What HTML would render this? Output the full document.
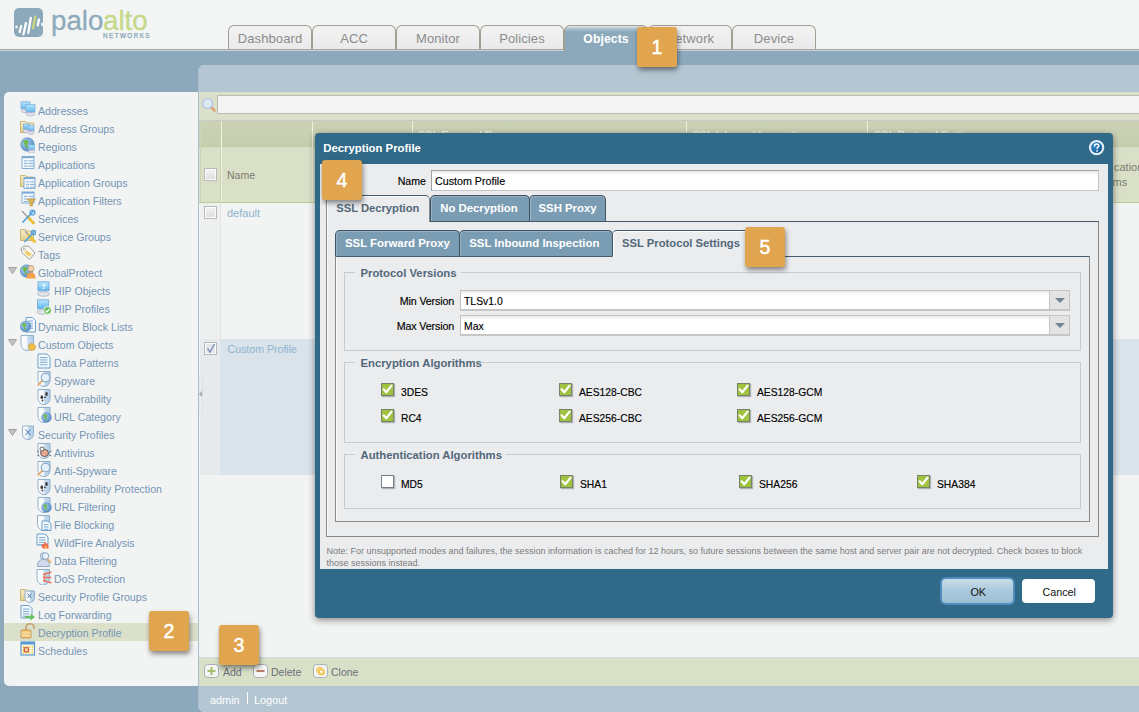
<!DOCTYPE html><html><head><meta charset="utf-8"><style>
*{margin:0;padding:0}
html,body{width:1139px;height:712px;overflow:hidden;background:#8ca9bc;position:relative;font-family:"Liberation Sans", sans-serif}
.t{position:absolute;white-space:nowrap}
.tab{position:absolute;top:25px;width:82px;height:23px;border:1px solid #a39e92;border-bottom:none;border-radius:6px 6px 0 0;background:linear-gradient(#f1f2f1,#e9eae9);text-align:center}
.tab span{display:block;font-size:13px;line-height:13px;margin-top:6px;color:#8c8c8c;letter-spacing:0.1px}
.tab.act{background:linear-gradient(#dfe7ec 0px,#a9bfcd 3px,#8ca9bc 6px);height:26px}
.tab.act span{color:#fff;font-weight:700;font-size:12.2px;margin-top:7px}
.cb{position:absolute;width:13px;height:13px;box-sizing:border-box;border:1px solid #b9b9b9;box-shadow:inset 0 0 0 1px #fbfbfb;background:linear-gradient(#f4f4f4,#dcdcdc)}
.dtab{position:absolute;box-sizing:border-box;border:1px solid #3e5463;border-bottom:none;border-radius:5px 5px 0 0;background:#7b9db3;box-shadow:inset 1px 1px 0 rgba(255,255,255,0.22)}
.dtab.act{background:#ebecee;border-color:#44586a #7f8a92 #7f8a92 #8a8a8a;box-shadow:inset 1px 1px 0 #fff}
.inp{position:absolute;box-sizing:border-box;border:1px solid #c2c2c2;border-bottom:2px solid #c6c6c6;background:linear-gradient(#e9e9e9,#fff 4px,#fff)}
.trig{position:absolute;width:21px;height:21px;box-sizing:border-box;border:1px solid #c6c6c6;border-bottom:2px solid #c6c6c6;background:#e3e3e3}
.trig:after{content:'';position:absolute;left:4.5px;top:6.5px;border-left:5.25px solid transparent;border-right:5.25px solid transparent;border-top:5.5px solid #6f8595}
.gcb{position:absolute;width:13px;height:13px;box-sizing:border-box;border:1px solid #75836a;background:#a0c33f;box-shadow:1px 1px 1px rgba(0,0,0,0.25)}
.gcb svg{position:absolute;left:-1px;top:-1px}
.wcb{position:absolute;width:13px;height:13px;box-sizing:border-box;border:1px solid #75808a;background:#fff;box-shadow:1px 1px 1px rgba(0,0,0,0.25)}
.badge{position:absolute;width:40px;height:40px;background:#e2a54f;border-radius:3px;box-shadow:1px 3px 5px rgba(0,0,0,0.45);color:#fff;font-size:19.5px;line-height:40px;text-align:center;-webkit-text-stroke:0.45px #fff}
</style></head><body>
<div style="position:absolute;left:0px;top:0px;width:1139px;height:49px;background:#f3f5f4"></div>
<div style="position:absolute;left:0px;top:49px;width:1139px;height:1px;background:#a7a59c"></div>
<div style="position:absolute;left:0px;top:50px;width:1139px;height:1px;background:#c3d3df"></div>
<div style="position:absolute;left:0px;top:51px;width:1139px;height:661px;background:#8ca9bc"></div>
<svg style="position:absolute;left:14px;top:8px" width="30" height="30" viewBox="0 0 30 30">
<rect x="0" y="0" width="29" height="29" rx="5" fill="#8ca9bc"/>
<g stroke="#fff" stroke-width="2.3" stroke-linecap="round">
<line x1="2.6" y1="18.6" x2="2.4" y2="19.2"/>
<line x1="7.2" y1="18" x2="5.6" y2="24"/>
<line x1="12" y1="15" x2="9.4" y2="26.3"/>
<line x1="16.8" y1="10" x2="14.3" y2="24.9"/>
<line x1="24.9" y1="11.5" x2="23.8" y2="17.3"/>
</g>
<line x1="21.3" y1="8.8" x2="19" y2="20.2" stroke="#c6d77f" stroke-width="2.4" stroke-linecap="round"/>
<rect x="27.4" y="14.8" width="2" height="3" fill="#fff"/>
</svg>
<div class="t" style="left:51px;top:6.65px;font-size:27.7px;line-height:27.7px;color:#8eaabb;font-weight:400;letter-spacing:0px;-webkit-text-stroke:0.3px #8eaabb">palo</div>
<div class="t" style="left:103px;top:6.65px;font-size:27.7px;line-height:27.7px;color:#c5d889;font-weight:400;letter-spacing:0px;-webkit-text-stroke:0.3px #c5d889">alto</div>
<div class="t" style="left:103px;top:33.47px;font-size:6.3px;line-height:6.3px;color:#86a4b8;font-weight:400;letter-spacing:1.45px;-webkit-text-stroke:0.25px #86a4b8">NETWORKS</div>
<div class="tab" style="left:228px"><span>Dashboard</span></div>
<div class="tab" style="left:312px"><span>ACC</span></div>
<div class="tab" style="left:396px"><span>Monitor</span></div>
<div class="tab" style="left:480px"><span>Policies</span></div>
<div class="tab act" style="left:564px"><span>Objects</span></div>
<div class="tab" style="left:648px"><span>Network</span></div>
<div class="tab" style="left:732px"><span>Device</span></div>
<div style="position:absolute;left:4px;top:92px;width:194px;height:594px;background:#f2f4f3;border-radius:5px 0 0 5px"></div>
<div style="position:absolute;left:4px;top:623px;width:194px;height:18px;background:#dae0c9"></div>
<svg width="0" height="0" style="position:absolute"><defs>
<linearGradient id="gScr" x1="0" y1="0" x2="0" y2="1"><stop offset="0" stop-color="#b9e6fc"/><stop offset="1" stop-color="#62b6ee"/></linearGradient>
<linearGradient id="gSh" x1="0" y1="0" x2="1" y2="0"><stop offset="0" stop-color="#fdfdfd"/><stop offset="0.5" stop-color="#f2f5f8"/><stop offset="0.55" stop-color="#c3d8ec"/><stop offset="1" stop-color="#b5cfe8"/></linearGradient>
<linearGradient id="gFold" x1="0" y1="0" x2="0" y2="1"><stop offset="0" stop-color="#f6eccb"/><stop offset="1" stop-color="#e2cf8c"/></linearGradient>
<radialGradient id="gGlobe" cx="0.35" cy="0.35" r="0.75"><stop offset="0" stop-color="#a9d2f2"/><stop offset="1" stop-color="#4f86c4"/></radialGradient>
</defs></svg>
<svg style="position:absolute;left:20px;top:101px" width="16" height="16" viewBox="0 0 16 16"><rect x="1" y="0.8" width="9" height="7" fill="url(#gScr)" stroke="#7fb3dc" stroke-width="0.8"/><ellipse cx="5.5" cy="9.8" rx="4.5" ry="1.8" fill="#e6e6ee" stroke="#a8a8bc" stroke-width="0.7"/><rect x="4.5" y="7.8" width="2" height="1.5" fill="#b8a8d8"/><rect x="6" y="3.5" width="9" height="7.5" fill="url(#gScr)" stroke="#7fb3dc" stroke-width="0.8"/><ellipse cx="10.5" cy="13.0" rx="4.5" ry="1.8" fill="#e6e6ee" stroke="#a8a8bc" stroke-width="0.7"/><rect x="9.5" y="11.0" width="2" height="1.5" fill="#b8a8d8"/></svg>
<div class="t" style="left:38px;top:106.03px;font-size:10.6px;line-height:10.6px;color:#7594b5;font-weight:400;letter-spacing:0px;">Addresses</div>
<svg style="position:absolute;left:20px;top:119px" width="16" height="16" viewBox="0 0 16 16"><path d="M0.5 2.5 H5.5 L7 4 H13.5 V13.5 H0.5 Z" fill="url(#gFold)" stroke="#c7b06a" stroke-width="0.9"/><rect x="3.5" y="5" width="6" height="5" fill="url(#gScr)" stroke="#7fb3dc" stroke-width="0.8"/><ellipse cx="6.5" cy="12" rx="3.0" ry="1.8" fill="#e6e6ee" stroke="#a8a8bc" stroke-width="0.7"/><rect x="5.5" y="10" width="2" height="1.5" fill="#b8a8d8"/><rect x="8" y="6.5" width="6" height="5" fill="url(#gScr)" stroke="#7fb3dc" stroke-width="0.8"/><ellipse cx="11.0" cy="13.5" rx="3.0" ry="1.8" fill="#e6e6ee" stroke="#a8a8bc" stroke-width="0.7"/><rect x="10.0" y="11.5" width="2" height="1.5" fill="#b8a8d8"/></svg>
<div class="t" style="left:38px;top:124.03px;font-size:10.6px;line-height:10.6px;color:#7594b5;font-weight:400;letter-spacing:0px;">Address Groups</div>
<svg style="position:absolute;left:20px;top:137px" width="16" height="16" viewBox="0 0 16 16"><circle cx="7.5" cy="7.5" r="6.8" fill="url(#gGlobe)" stroke="#4a7cb8" stroke-width="0.5"/><path d="M2.74 4.1 Q6.82 1.38 8.86 4.779999999999999 L6.82 8.18 L9.54 12.26 L6.14 10.9 Z" fill="#72b84e"/><rect x="8.5" y="8" width="6" height="4.5" fill="url(#gScr)" stroke="#7fb3dc" stroke-width="0.8"/><ellipse cx="11.5" cy="14.5" rx="3.0" ry="1.8" fill="#e6e6ee" stroke="#a8a8bc" stroke-width="0.7"/><rect x="10.5" y="12.5" width="2" height="1.5" fill="#b8a8d8"/></svg>
<div class="t" style="left:38px;top:142.03px;font-size:10.6px;line-height:10.6px;color:#7594b5;font-weight:400;letter-spacing:0px;">Regions</div>
<svg style="position:absolute;left:20px;top:155px" width="16" height="16" viewBox="0 0 16 16"><rect x="2" y="1.5" width="12" height="12" fill="#f3f8fc" stroke="#79a9d3" stroke-width="0.9"/><rect x="2" y="1.5" width="12" height="1.6" fill="#79a9d3"/><rect x="4" y="5.3" width="3.5999999999999996" height="1.1" fill="#8db5da"/><rect x="8.56" y="5.3" width="5.4" height="1.1" fill="#8db5da"/><rect x="4" y="7.9" width="3.5999999999999996" height="1.1" fill="#8db5da"/><rect x="8.56" y="7.9" width="5.4" height="1.1" fill="#8db5da"/><rect x="4" y="10.5" width="3.5999999999999996" height="1.1" fill="#8db5da"/><rect x="8.56" y="10.5" width="5.4" height="1.1" fill="#8db5da"/></svg>
<div class="t" style="left:38px;top:160.03px;font-size:10.6px;line-height:10.6px;color:#7594b5;font-weight:400;letter-spacing:0px;">Applications</div>
<svg style="position:absolute;left:20px;top:173px" width="16" height="16" viewBox="0 0 16 16"><path d="M0.5 2.5 H5.5 L7 4 H13.5 V13.5 H0.5 Z" fill="url(#gFold)" stroke="#c7b06a" stroke-width="0.9"/><rect x="4" y="4.5" width="11" height="11" fill="#f3f8fc" stroke="#79a9d3" stroke-width="0.9"/><rect x="4" y="4.5" width="11" height="1.6" fill="#79a9d3"/><rect x="6" y="8.3" width="3.3" height="1.1" fill="#8db5da"/><rect x="10.18" y="8.3" width="4.95" height="1.1" fill="#8db5da"/><rect x="6" y="10.9" width="3.3" height="1.1" fill="#8db5da"/><rect x="10.18" y="10.9" width="4.95" height="1.1" fill="#8db5da"/><rect x="6" y="13.5" width="3.3" height="1.1" fill="#8db5da"/><rect x="10.18" y="13.5" width="4.95" height="1.1" fill="#8db5da"/></svg>
<div class="t" style="left:38px;top:178.03px;font-size:10.6px;line-height:10.6px;color:#7594b5;font-weight:400;letter-spacing:0px;">Application Groups</div>
<svg style="position:absolute;left:20px;top:191px" width="16" height="16" viewBox="0 0 16 16"><rect x="2" y="1" width="12" height="11" fill="#f3f8fc" stroke="#79a9d3" stroke-width="0.9"/><rect x="2" y="1" width="12" height="1.6" fill="#79a9d3"/><rect x="4" y="4.8" width="3.5999999999999996" height="1.1" fill="#8db5da"/><rect x="8.56" y="4.8" width="5.4" height="1.1" fill="#8db5da"/><rect x="4" y="7.4" width="3.5999999999999996" height="1.1" fill="#8db5da"/><rect x="8.56" y="7.4" width="5.4" height="1.1" fill="#8db5da"/><rect x="4" y="10.0" width="3.5999999999999996" height="1.1" fill="#8db5da"/><rect x="8.56" y="10.0" width="5.4" height="1.1" fill="#8db5da"/><path d="M7 8 H15.5 L12.5 11.5 V15 H10 V11.5 Z" fill="#ddb45a" stroke="#b8902e" stroke-width="0.6"/></svg>
<div class="t" style="left:38px;top:196.03px;font-size:10.6px;line-height:10.6px;color:#7594b5;font-weight:400;letter-spacing:0px;">Application Filters</div>
<svg style="position:absolute;left:20px;top:209px" width="16" height="16" viewBox="0 0 16 16"><line x1="2" y1="2" x2="13" y2="14" stroke="#9a9a9a" stroke-width="1.2"/><line x1="8" y1="8" x2="13.5" y2="14" stroke="#e9c23c" stroke-width="3" stroke-linecap="round"/><line x1="13" y1="2.5" x2="3" y2="13" stroke="#5aa0de" stroke-width="1.8" stroke-linecap="round"/><circle cx="12.5" cy="3.5" r="2.4" fill="none" stroke="#5aa0de" stroke-width="1.4"/></svg>
<div class="t" style="left:38px;top:214.03px;font-size:10.6px;line-height:10.6px;color:#7594b5;font-weight:400;letter-spacing:0px;">Services</div>
<svg style="position:absolute;left:20px;top:227px" width="16" height="16" viewBox="0 0 16 16"><path d="M0.5 2.5 H5.5 L7 4 H13.5 V13.5 H0.5 Z" fill="url(#gFold)" stroke="#c7b06a" stroke-width="0.9"/><line x1="5" y1="4" x2="14" y2="14" stroke="#9a9a9a" stroke-width="1.2"/><line x1="9" y1="8.5" x2="14.5" y2="14.5" stroke="#e9c23c" stroke-width="3" stroke-linecap="round"/><line x1="14" y1="5" x2="5" y2="14.5" stroke="#5aa0de" stroke-width="1.8" stroke-linecap="round"/><circle cx="13.5" cy="5.5" r="2.2" fill="none" stroke="#5aa0de" stroke-width="1.3"/></svg>
<div class="t" style="left:38px;top:232.03px;font-size:10.6px;line-height:10.6px;color:#7594b5;font-weight:400;letter-spacing:0px;">Service Groups</div>
<svg style="position:absolute;left:20px;top:245px" width="16" height="16" viewBox="0 0 16 16"><path d="M1 3.5 L4 1 L9 1.5 L15 8 L9.5 14.5 L2 7.5 Z" fill="#fbfbf6" stroke="#8f8f8f" stroke-width="0.9"/><path d="M6 5 L12 9 L9.5 12 L4.5 8 Z" fill="#f1cd6d"/><circle cx="4.3" cy="4.2" r="1.1" fill="none" stroke="#999" stroke-width="0.7"/></svg>
<div class="t" style="left:38px;top:250.03px;font-size:10.6px;line-height:10.6px;color:#7594b5;font-weight:400;letter-spacing:0px;">Tags</div>
<svg style="position:absolute;left:20px;top:263px" width="16" height="16" viewBox="0 0 16 16"><circle cx="6.5" cy="8" r="6.2" fill="url(#gGlobe)" stroke="#4a7cb8" stroke-width="0.5"/><path d="M2.16 4.9 Q5.88 2.42 7.74 5.52 L5.88 8.620000000000001 L8.36 12.34 L5.26 11.1 Z" fill="#72b84e"/><circle cx="11" cy="5.5" r="3" fill="#f1d3b3" stroke="#b88a5c" stroke-width="0.7"/><path d="M6.5 15.5 C6.5 11 8.5 9.5 11 9.5 C13.5 9.5 15.5 11 15.5 15.5 Z" fill="#f5a14a"/></svg>
<svg style="position:absolute;left:8px;top:267px" width="9" height="7" viewBox="0 0 9 7"><path d="M0.5 0.5 H8.5 L4.5 6.5 Z" fill="#c4c4c4" stroke="#a0a0a0" stroke-width="1"/></svg>
<div class="t" style="left:38px;top:268.03px;font-size:10.6px;line-height:10.6px;color:#7594b5;font-weight:400;letter-spacing:0px;">GlobalProtect</div>
<svg style="position:absolute;left:36px;top:281px" width="16" height="16" viewBox="0 0 16 16"><rect x="2" y="0.8" width="11" height="9" fill="url(#gScr)" stroke="#6aa6da" stroke-width="0.8"/><text x="7.5" y="8" font-size="8" text-anchor="middle" fill="#fff" font-family="Liberation Sans" font-weight="700">?</text><ellipse cx="7.5" cy="13" rx="6" ry="2.3" fill="#e3e3ea" stroke="#a8a8b8" stroke-width="0.7"/></svg>
<div class="t" style="left:54px;top:286.03px;font-size:10.6px;line-height:10.6px;color:#7594b5;font-weight:400;letter-spacing:0px;">HIP Objects</div>
<svg style="position:absolute;left:36px;top:299px" width="16" height="16" viewBox="0 0 16 16"><rect x="1.5" y="0.8" width="11" height="9" fill="url(#gScr)" stroke="#6aa6da" stroke-width="0.8"/><ellipse cx="7" cy="13" rx="6" ry="2.3" fill="#e3e3ea" stroke="#a8a8b8" stroke-width="0.7"/><circle cx="11.5" cy="11.5" r="4" fill="#6cbf5e" stroke="#fff" stroke-width="0.8"/><path d="M9.6 11.6 L11 13 L13.4 10.2" fill="none" stroke="#fff" stroke-width="1.2"/></svg>
<div class="t" style="left:54px;top:304.03px;font-size:10.6px;line-height:10.6px;color:#7594b5;font-weight:400;letter-spacing:0px;">HIP Profiles</div>
<svg style="position:absolute;left:20px;top:317px" width="16" height="16" viewBox="0 0 16 16"><path d="M6 0.5 H12.5 L15.5 3.5 V15.0 H6 Z" fill="#f3f8fc" stroke="#6c9fcb" stroke-width="1"/><rect x="8" y="3.5" width="5.0" height="1.1" fill="#86b0d6"/><rect x="8" y="5.9" width="5.0" height="1.1" fill="#86b0d6"/><rect x="8" y="8.3" width="5.0" height="1.1" fill="#86b0d6"/><rect x="8" y="10.7" width="5.0" height="1.1" fill="#86b0d6"/><circle cx="5.5" cy="9.5" r="5.3" fill="url(#gGlobe)" stroke="#4a7cb8" stroke-width="0.5"/><path d="M1.7900000000000005 6.85 Q4.97 4.73 6.5600000000000005 7.38 L4.97 10.03 L7.09 13.209999999999999 L4.4399999999999995 12.15 Z" fill="#72b84e"/></svg>
<div class="t" style="left:38px;top:322.03px;font-size:10.6px;line-height:10.6px;color:#7594b5;font-weight:400;letter-spacing:0px;">Dynamic Block Lists</div>
<svg style="position:absolute;left:20px;top:335px" width="16" height="16" viewBox="0 0 16 16"><path d="M1 0.5 H13.5 V8.75 C13.5 13.25 10.375 15.5 7.25 15.5 C4.125 15.5 1 13.25 1 8.75 Z" fill="url(#gSh)" stroke="#86a8c8" stroke-width="0.9"/><circle cx="12" cy="12" r="3.2" fill="#f3c44c" stroke="#d99d2a" stroke-width="1.6" stroke-dasharray="1.3 0.9"/></svg>
<svg style="position:absolute;left:8px;top:339px" width="9" height="7" viewBox="0 0 9 7"><path d="M0.5 0.5 H8.5 L4.5 6.5 Z" fill="#c4c4c4" stroke="#a0a0a0" stroke-width="1"/></svg>
<div class="t" style="left:38px;top:340.03px;font-size:10.6px;line-height:10.6px;color:#7594b5;font-weight:400;letter-spacing:0px;">Custom Objects</div>
<svg style="position:absolute;left:36px;top:353px" width="16" height="16" viewBox="0 0 16 16"><path d="M2 1 H11 L14 4 V15 H2 Z" fill="#f3f8fc" stroke="#6c9fcb" stroke-width="1"/><rect x="4" y="4.0" width="7.5" height="1.1" fill="#86b0d6"/><rect x="4" y="6.4" width="7.5" height="1.1" fill="#86b0d6"/><rect x="4" y="8.8" width="7.5" height="1.1" fill="#86b0d6"/><rect x="4" y="11.2" width="7.5" height="1.1" fill="#86b0d6"/></svg>
<div class="t" style="left:54px;top:358.03px;font-size:10.6px;line-height:10.6px;color:#7594b5;font-weight:400;letter-spacing:0px;">Data Patterns</div>
<svg style="position:absolute;left:36px;top:371px" width="16" height="16" viewBox="0 0 16 16"><path d="M2 0.5 H14 V8.75 C14 13.25 11.0 15.5 8.0 15.5 C5.0 15.5 2 13.25 2 8.75 Z" fill="url(#gSh)" stroke="#86a8c8" stroke-width="0.9"/><line x1="6.49" y1="9.51" x2="2.1900000000000004" y2="13.809999999999999" stroke="#e7ad6a" stroke-width="1.8" stroke-linecap="round"/><circle cx="9.5" cy="6.5" r="4.3" fill="#e2f1fb" stroke="#8aa7c4" stroke-width="1.1"/></svg>
<div class="t" style="left:54px;top:376.03px;font-size:10.6px;line-height:10.6px;color:#7594b5;font-weight:400;letter-spacing:0px;">Spyware</div>
<svg style="position:absolute;left:36px;top:389px" width="16" height="16" viewBox="0 0 16 16"><path d="M2 0.5 H14 V8.75 C14 13.25 11.0 15.5 8.0 15.5 C5.0 15.5 2 13.25 2 8.75 Z" fill="url(#gSh)" stroke="#86a8c8" stroke-width="0.9"/><ellipse cx="5.8" cy="8.2" rx="1.3" ry="1.9" fill="#3a3a3a"/><ellipse cx="10.5" cy="5" rx="1.3" ry="1.9" fill="#3a3a3a"/><circle cx="6.5" cy="11.5" r="0.9" fill="#3a3a3a"/><circle cx="9" cy="8.3" r="0.9" fill="#3a3a3a"/></svg>
<div class="t" style="left:54px;top:394.03px;font-size:10.6px;line-height:10.6px;color:#7594b5;font-weight:400;letter-spacing:0px;">Vulnerability</div>
<svg style="position:absolute;left:36px;top:407px" width="16" height="16" viewBox="0 0 16 16"><path d="M2 0.5 H14 V8.75 C14 13.25 11.0 15.5 8.0 15.5 C5.0 15.5 2 13.25 2 8.75 Z" fill="url(#gSh)" stroke="#86a8c8" stroke-width="0.9"/><circle cx="10.5" cy="10.5" r="4.8" fill="url(#gGlobe)" stroke="#4a7cb8" stroke-width="0.5"/><path d="M7.140000000000001 8.1 Q10.02 6.18 11.46 8.58 L10.02 10.98 L11.94 13.86 L9.54 12.9 Z" fill="#72b84e"/></svg>
<div class="t" style="left:54px;top:412.03px;font-size:10.6px;line-height:10.6px;color:#7594b5;font-weight:400;letter-spacing:0px;">URL Category</div>
<svg style="position:absolute;left:20px;top:425px" width="16" height="16" viewBox="0 0 16 16"><path d="M2.5 1 H13.5 V8.425 C13.5 12.475 10.75 14.5 8.0 14.5 C5.25 14.5 2.5 12.475 2.5 8.425 Z" fill="url(#gSh)" stroke="#86a8c8" stroke-width="0.9"/><path d="M5.5 4.5 L10.5 10 M10.5 4.5 L5.5 10" stroke="#5a86bb" stroke-width="1.1"/></svg>
<svg style="position:absolute;left:8px;top:429px" width="9" height="7" viewBox="0 0 9 7"><path d="M0.5 0.5 H8.5 L4.5 6.5 Z" fill="#c4c4c4" stroke="#a0a0a0" stroke-width="1"/></svg>
<div class="t" style="left:38px;top:430.03px;font-size:10.6px;line-height:10.6px;color:#7594b5;font-weight:400;letter-spacing:0px;">Security Profiles</div>
<svg style="position:absolute;left:36px;top:443px" width="16" height="16" viewBox="0 0 16 16"><path d="M2 0.5 H14 V8.75 C14 13.25 11.0 15.5 8.0 15.5 C5.0 15.5 2 13.25 2 8.75 Z" fill="url(#gSh)" stroke="#86a8c8" stroke-width="0.9"/><ellipse cx="8.5" cy="10" rx="4" ry="3.6" fill="#e8a690" stroke="#555" stroke-width="0.9"/><circle cx="6" cy="6" r="2" fill="#fff" stroke="#555" stroke-width="0.9"/><path d="M3 9 L1 8 M3 12 L1 13 M13.5 9 L15.5 8 M13.5 12 L15.5 13" stroke="#555" stroke-width="0.8"/></svg>
<div class="t" style="left:54px;top:448.03px;font-size:10.6px;line-height:10.6px;color:#7594b5;font-weight:400;letter-spacing:0px;">Antivirus</div>
<svg style="position:absolute;left:36px;top:461px" width="16" height="16" viewBox="0 0 16 16"><path d="M2 0.5 H14 V8.75 C14 13.25 11.0 15.5 8.0 15.5 C5.0 15.5 2 13.25 2 8.75 Z" fill="url(#gSh)" stroke="#86a8c8" stroke-width="0.9"/><line x1="6.49" y1="9.51" x2="2.1900000000000004" y2="13.809999999999999" stroke="#e7ad6a" stroke-width="1.8" stroke-linecap="round"/><circle cx="9.5" cy="6.5" r="4.3" fill="#e2f1fb" stroke="#8aa7c4" stroke-width="1.1"/></svg>
<div class="t" style="left:54px;top:466.03px;font-size:10.6px;line-height:10.6px;color:#7594b5;font-weight:400;letter-spacing:0px;">Anti-Spyware</div>
<svg style="position:absolute;left:36px;top:479px" width="16" height="16" viewBox="0 0 16 16"><path d="M2 0.5 H14 V8.75 C14 13.25 11.0 15.5 8.0 15.5 C5.0 15.5 2 13.25 2 8.75 Z" fill="url(#gSh)" stroke="#86a8c8" stroke-width="0.9"/><ellipse cx="5.8" cy="8.2" rx="1.3" ry="1.9" fill="#3a3a3a"/><ellipse cx="10.5" cy="5" rx="1.3" ry="1.9" fill="#3a3a3a"/><circle cx="6.5" cy="11.5" r="0.9" fill="#3a3a3a"/><circle cx="9" cy="8.3" r="0.9" fill="#3a3a3a"/></svg>
<div class="t" style="left:54px;top:484.03px;font-size:10.6px;line-height:10.6px;color:#7594b5;font-weight:400;letter-spacing:0px;">Vulnerability Protection</div>
<svg style="position:absolute;left:36px;top:497px" width="16" height="16" viewBox="0 0 16 16"><path d="M2 0.5 H14 V8.75 C14 13.25 11.0 15.5 8.0 15.5 C5.0 15.5 2 13.25 2 8.75 Z" fill="url(#gSh)" stroke="#86a8c8" stroke-width="0.9"/><circle cx="10.5" cy="10.5" r="4.8" fill="url(#gGlobe)" stroke="#4a7cb8" stroke-width="0.5"/><path d="M7.140000000000001 8.1 Q10.02 6.18 11.46 8.58 L10.02 10.98 L11.94 13.86 L9.54 12.9 Z" fill="#72b84e"/></svg>
<div class="t" style="left:54px;top:502.03px;font-size:10.6px;line-height:10.6px;color:#7594b5;font-weight:400;letter-spacing:0px;">URL Filtering</div>
<svg style="position:absolute;left:36px;top:515px" width="16" height="16" viewBox="0 0 16 16"><path d="M1.5 0.5 H13.5 V8.75 C13.5 13.25 10.5 15.5 7.5 15.5 C4.5 15.5 1.5 13.25 1.5 8.75 Z" fill="url(#gSh)" stroke="#86a8c8" stroke-width="0.9"/><path d="M6 6 H12 L15 9 V15.5 H6 Z" fill="#f3f8fc" stroke="#6c9fcb" stroke-width="1"/><rect x="8" y="9.0" width="4.5" height="1.1" fill="#86b0d6"/><rect x="8" y="11.4" width="4.5" height="1.1" fill="#86b0d6"/><rect x="8" y="13.8" width="4.5" height="1.1" fill="#86b0d6"/><rect x="8" y="16.2" width="4.5" height="1.1" fill="#86b0d6"/></svg>
<div class="t" style="left:54px;top:520.03px;font-size:10.6px;line-height:10.6px;color:#7594b5;font-weight:400;letter-spacing:0px;">File Blocking</div>
<svg style="position:absolute;left:36px;top:533px" width="16" height="16" viewBox="0 0 16 16"><path d="M1 1 H9 L12 4 V12 H1 Z" fill="#f3f8fc" stroke="#6c9fcb" stroke-width="1"/><rect x="3" y="4.0" width="6.5" height="1.1" fill="#86b0d6"/><rect x="3" y="6.4" width="6.5" height="1.1" fill="#86b0d6"/><rect x="3" y="8.8" width="6.5" height="1.1" fill="#86b0d6"/><rect x="3" y="11.2" width="6.5" height="1.1" fill="#86b0d6"/><path d="M8 15.5 C5.5 15.5 5 12.5 7 10.5 C7.5 12 8.5 11.5 8.5 9 C11 10 13.5 12.5 12.5 15.5 Z" fill="#ef6a4a"/><path d="M9 15.5 C8 14 9 12.5 10 12 C10 13.5 11.5 14 11 15.5 Z" fill="#f7c04c"/></svg>
<div class="t" style="left:54px;top:538.03px;font-size:10.6px;line-height:10.6px;color:#7594b5;font-weight:400;letter-spacing:0px;">WildFire Analysis</div>
<svg style="position:absolute;left:36px;top:551px" width="16" height="16" viewBox="0 0 16 16"><circle cx="7.5" cy="5" r="3.3" fill="#d7e4f1" stroke="#8ca4bf" stroke-width="0.9"/><path d="M1.5 15.5 C1.5 10 4 8.5 7.5 8.5 C11 8.5 13.5 10 13.5 15.5 Z" fill="#cfdbea" stroke="#8ca4bf" stroke-width="0.9"/><line x1="11" y1="7.5" x2="14.5" y2="11" stroke="#e7ad6a" stroke-width="1.8" stroke-linecap="round"/><circle cx="9.5" cy="5" r="3.3" fill="#e8f3fb" stroke="#8aa7c4" stroke-width="1"/></svg>
<div class="t" style="left:54px;top:556.03px;font-size:10.6px;line-height:10.6px;color:#7594b5;font-weight:400;letter-spacing:0px;">Data Filtering</div>
<svg style="position:absolute;left:36px;top:569px" width="16" height="16" viewBox="0 0 16 16"><path d="M1 0.5 H13.5 V9.025 C13.5 13.674999999999999 10.375 16.0 7.25 16.0 C4.125 16.0 1 13.674999999999999 1 9.025 Z" fill="url(#gSh)" stroke="#86a8c8" stroke-width="0.9"/><path d="M15.5 3 L7.5 5.5 M15.5 8.5 L7 8.5 M15.5 14 L7.5 11.5" stroke="#e8765e" stroke-width="1.4"/><path d="M9 4 L7.5 5.5 L9 7 M9 7 L7 8.5 L9 10 M9 10 L7.5 11.5 L9 13" fill="none" stroke="#e8765e" stroke-width="1"/></svg>
<div class="t" style="left:54px;top:574.03px;font-size:10.6px;line-height:10.6px;color:#7594b5;font-weight:400;letter-spacing:0px;">DoS Protection</div>
<svg style="position:absolute;left:20px;top:587px" width="16" height="16" viewBox="0 0 16 16"><path d="M0.5 2.5 H5.5 L7 4 H13.5 V13.5 H0.5 Z" fill="url(#gFold)" stroke="#c7b06a" stroke-width="0.9"/><path d="M5 4 H14.5 V10.325 C14.5 13.775 12.125 15.5 9.75 15.5 C7.375 15.5 5 13.775 5 10.325 Z" fill="url(#gSh)" stroke="#86a8c8" stroke-width="0.9"/><path d="M7.5 6.5 L11.5 11 M11.5 6.5 L7.5 11" stroke="#4f78ad" stroke-width="1"/></svg>
<div class="t" style="left:38px;top:592.03px;font-size:10.6px;line-height:10.6px;color:#7594b5;font-weight:400;letter-spacing:0px;">Security Profile Groups</div>
<svg style="position:absolute;left:20px;top:605px" width="16" height="16" viewBox="0 0 16 16"><path d="M1 0.5 H9 L12 3.5 V13.0 H1 Z" fill="#f3f8fc" stroke="#6c9fcb" stroke-width="1"/><rect x="3" y="3.5" width="6.5" height="1.1" fill="#86b0d6"/><rect x="3" y="5.9" width="6.5" height="1.1" fill="#86b0d6"/><rect x="3" y="8.3" width="6.5" height="1.1" fill="#86b0d6"/><rect x="3" y="10.7" width="6.5" height="1.1" fill="#86b0d6"/><path d="M5 11 H10.5 V8.5 L15 12 L10.5 15.5 V13 H5 Z" fill="#66c25c"/></svg>
<div class="t" style="left:38px;top:610.03px;font-size:10.6px;line-height:10.6px;color:#7594b5;font-weight:400;letter-spacing:0px;">Log Forwarding</div>
<svg style="position:absolute;left:20px;top:623px" width="16" height="16" viewBox="0 0 16 16"><path d="M6 7.5 V4.5 C6 2 8 0.8 10 0.8 C12 0.8 14 2 14 4.5 V6" fill="none" stroke="#c8a070" stroke-width="1.6"/><rect x="1" y="7" width="10" height="8" rx="1" fill="#f3c879" stroke="#c8905a" stroke-width="0.9"/><rect x="1.5" y="9.5" width="9" height="1" fill="#fbe6b8"/><rect x="1.5" y="12" width="9" height="1" fill="#fbe6b8"/></svg>
<div class="t" style="left:38px;top:628.03px;font-size:10.6px;line-height:10.6px;color:#7594b5;font-weight:400;letter-spacing:0px;">Decryption Profile</div>
<svg style="position:absolute;left:20px;top:641px" width="16" height="16" viewBox="0 0 16 16"><rect x="1" y="1" width="13.5" height="13" fill="#fbf8e4" stroke="#5b9ad4" stroke-width="1.2"/><rect x="1" y="1" width="13.5" height="2.5" fill="#5b9ad4"/><rect x="2.5" y="5" width="1.6" height="1.6" fill="#ebc94a"/><rect x="5.5" y="5" width="1.6" height="1.6" fill="#ebc94a"/><rect x="8.5" y="5" width="1.6" height="1.6" fill="#ebc94a"/><rect x="11.5" y="5" width="1.6" height="1.6" fill="#ebc94a"/><rect x="2.5" y="8" width="1.6" height="1.6" fill="#ebc94a"/><rect x="5.5" y="8" width="1.6" height="1.6" fill="#ebc94a"/><rect x="8.5" y="8" width="1.6" height="1.6" fill="#ebc94a"/><rect x="11.5" y="8" width="1.6" height="1.6" fill="#ebc94a"/><rect x="2.5" y="11" width="1.6" height="1.6" fill="#ebc94a"/><rect x="5.5" y="11" width="1.6" height="1.6" fill="#ebc94a"/><rect x="8.5" y="11" width="1.6" height="1.6" fill="#ebc94a"/><rect x="11.5" y="11" width="1.6" height="1.6" fill="#ebc94a"/><rect x="4.3" y="6.8" width="4" height="4" fill="none" stroke="#d0453a" stroke-width="1.1"/></svg>
<div class="t" style="left:38px;top:646.03px;font-size:10.6px;line-height:10.6px;color:#7594b5;font-weight:400;letter-spacing:0px;">Schedules</div>
<div style="position:absolute;left:198px;top:65px;width:941px;height:647px;background:#f2f4f3;border-radius:7px 0 0 7px;overflow:hidden">
<div style="position:absolute;left:-198px;top:-65px;width:1139px;height:712px">
<div style="position:absolute;left:198px;top:65px;width:941px;height:27px;background:#b4c6d2"></div>
<div style="position:absolute;left:198px;top:92px;width:941px;height:28px;background:#dbe0ca"></div>
<div style="position:absolute;left:198px;top:120px;width:941px;height:1px;background:#c9cbc3"></div>
<svg style="position:absolute;left:201px;top:97px" width="16" height="16" viewBox="0 0 16 16">
<line x1="9.5" y1="9.5" x2="13.5" y2="13.5" stroke="#d9a77a" stroke-width="2.6" stroke-linecap="round"/>
<circle cx="6.5" cy="6.5" r="5" fill="#dfe9f3" stroke="#a9c4de" stroke-width="1.2"/>
</svg>
<div style="position:absolute;left:217px;top:95px;width:930px;height:19px;background:#f3f4f3;border:1px solid #bbbcb4;box-sizing:border-box"></div>
<div style="position:absolute;left:198px;top:121px;width:941px;height:26px;background:linear-gradient(#cbd2b5,#c6ceb0)"></div>
<div style="position:absolute;left:198px;top:147px;width:941px;height:55px;background:#dae0c8"></div>
<div style="position:absolute;left:198px;top:202px;width:941px;height:1px;background:#bccb9c"></div>
<div style="position:absolute;left:198px;top:146px;width:941px;height:1px;background:#c0cba3"></div>
<div style="position:absolute;left:200px;top:121px;width:1px;height:81px;background:#cdd6b2"></div>
<div style="position:absolute;left:220px;top:121px;width:1px;height:81px;background:#c9d3ac"></div>
<div style="position:absolute;left:221px;top:121px;width:1px;height:81px;background:#eef1e2"></div>
<div style="position:absolute;left:312px;top:121px;width:1px;height:81px;background:#eef1e2"></div>
<div style="position:absolute;left:412px;top:121px;width:1px;height:81px;background:#eef1e2"></div>
<div style="position:absolute;left:686px;top:121px;width:1px;height:81px;background:#eef1e2"></div>
<div style="position:absolute;left:867px;top:121px;width:1px;height:81px;background:#eef1e2"></div>
<div class="t" style="left:418px;top:129.99px;font-size:11px;line-height:11px;color:#fff;font-weight:400;letter-spacing:0px;">SSL Forward Proxy</div>
<div class="t" style="left:692px;top:129.99px;font-size:11px;line-height:11px;color:#fff;font-weight:400;letter-spacing:0px;">SSL Inbound Inspection</div>
<div class="t" style="left:874px;top:129.99px;font-size:11px;line-height:11px;color:#fff;font-weight:400;letter-spacing:0px;">SSL Protocol Settings</div>
<div class="cb" style="left:204px;top:168px"></div>
<div class="t" style="left:227px;top:170.11px;font-size:10.5px;line-height:10.5px;color:#7a7a6c;font-weight:400;letter-spacing:0px;">Name</div>
<div class="t" style="left:1114px;top:162.49px;font-size:11px;line-height:11px;color:#7a7a6c;font-weight:400;letter-spacing:0px;">cation</div>
<div class="t" style="left:1112.5px;top:177.29px;font-size:11px;line-height:11px;color:#7a7a6c;font-weight:400;letter-spacing:0px;">ms</div>
<div style="position:absolute;left:200px;top:203px;width:20px;height:136px;background:#eef0ef"></div>
<div style="position:absolute;left:220px;top:203px;width:1px;height:136px;background:#e2e4e2"></div>
<div class="cb" style="left:204px;top:206px"></div>
<div class="t" style="left:227px;top:207.69px;font-size:11px;line-height:11px;color:#8fb3cd;font-weight:400;letter-spacing:0px;">default</div>
<div style="position:absolute;left:200px;top:339px;width:939px;height:136px;background:#d9e3ea"></div>
<div style="position:absolute;left:200px;top:339px;width:20px;height:136px;background:#e6eaed"></div>
<div class="cb" style="left:204px;top:342px;background:#e3e6e9"><svg width="11" height="11" viewBox="0 0 11 11" style="position:absolute;left:0;top:0"><path d="M2.5 5.5 L5 9 L9.5 1" fill="none" stroke="#8890c6" stroke-width="1.5"/></svg></div>
<div class="t" style="left:227.5px;top:343.93px;font-size:10.6px;line-height:10.6px;color:#8fb5d0;font-weight:400;letter-spacing:0px;">Custom Profile</div>
<div style="position:absolute;left:198px;top:377px;width:4px;height:34px;background:#e9ecee;border:1px solid #dde1e3;border-left:none"></div>
<div style="position:absolute;left:199px;top:391px;width:0;height:0;border-top:3px solid transparent;border-bottom:3px solid transparent;border-right:3px solid #a9a9a9"></div>
<div style="position:absolute;left:198px;top:657px;width:941px;height:29px;background:#d9e0c8"></div>
<div style="position:absolute;left:198px;top:657px;width:941px;height:1px;background:#d5d8d6"></div>
<div style="position:absolute;left:198px;top:686px;width:941px;height:26px;background:#b4c6d2"></div>
<svg style="position:absolute;left:204px;top:664px" width="15" height="14" viewBox="0 0 15 14">
<rect x="0.5" y="0.5" width="14" height="13" rx="3" fill="#f4f5f2" stroke="#a9aeb4"/>
<path d="M7.5 3 V11 M3.5 7 H11.5" stroke="#a5bd6c" stroke-width="2"/></svg>
<div class="t" style="left:223px;top:666.71px;font-size:10.5px;line-height:10.5px;color:#6e6e7a;font-weight:400;letter-spacing:0px;">Add</div>
<svg style="position:absolute;left:253px;top:664px" width="15" height="14" viewBox="0 0 15 14">
<rect x="0.5" y="0.5" width="14" height="13" rx="3" fill="#f4f5f2" stroke="#a9aeb4"/>
<path d="M3.5 7 H11.5" stroke="#b77b6e" stroke-width="2"/></svg>
<div class="t" style="left:271px;top:666.71px;font-size:10.5px;line-height:10.5px;color:#6e6e7a;font-weight:400;letter-spacing:0px;">Delete</div>
<svg style="position:absolute;left:313px;top:664px" width="15" height="14" viewBox="0 0 15 14">
<rect x="0.5" y="0.5" width="14" height="13" rx="3" fill="#f4f5f2" stroke="#a9aeb4"/>
<circle cx="6.5" cy="6" r="3.5" fill="#f2d27a"/><circle cx="8.5" cy="8" r="3.5" fill="#f0c95e"/><circle cx="8.3" cy="7.8" r="1.3" fill="#fff"/></svg>
<div class="t" style="left:331px;top:666.71px;font-size:10.5px;line-height:10.5px;color:#6e6e7a;font-weight:400;letter-spacing:0px;">Clone</div>
<div class="t" style="left:210px;top:695.07px;font-size:10.9px;line-height:10.9px;color:#fff;font-weight:400;letter-spacing:0px;">admin</div>
<div style="position:absolute;left:247px;top:692px;width:1px;height:12px;background:#fff"></div>
<div class="t" style="left:254px;top:695.07px;font-size:10.9px;line-height:10.9px;color:#fff;font-weight:400;letter-spacing:0px;">Logout</div>
<div style="position:absolute;left:198px;top:65px;width:1px;height:647px;background:#a9bfcf"></div>
</div></div>
<div style="position:absolute;left:315px;top:133px;width:798px;height:485px;background:#316a88;border-radius:4px;box-shadow:0 2px 7px rgba(0,0,0,0.45)"></div>
<div class="t" style="left:323.2px;top:142.99px;font-size:11.35px;line-height:11.35px;color:#fff;font-weight:700;letter-spacing:0px;">Decryption Profile</div>
<svg style="position:absolute;left:1088px;top:139px" width="17" height="17" viewBox="0 0 17 17">
<defs><radialGradient id="gHelp" cx="0.3" cy="0.3" r="0.8"><stop offset="0" stop-color="#3a8ccc"/><stop offset="1" stop-color="#0a5a94"/></radialGradient></defs>
<circle cx="8.6" cy="8.6" r="7.7" fill="#e6edf7"/>
<circle cx="8.6" cy="8.6" r="5.5" fill="url(#gHelp)"/>
<path d="M6.6 6.9 C6.6 5.6 7.5 4.9 8.7 4.9 C9.9 4.9 10.8 5.6 10.8 6.7 C10.8 8 9.1 8.2 9.1 9.6" fill="none" stroke="#fff" stroke-width="1.45" stroke-linecap="round"/>
<circle cx="9.05" cy="11.9" r="0.9" fill="#fff"/>
</svg>
<div style="position:absolute;left:320px;top:164px;width:788px;height:405px;background:#ebecee"></div>
<div class="t" style="left:397.7px;top:176.03px;font-size:10.6px;line-height:10.6px;color:#000;font-weight:400;letter-spacing:0px;-webkit-text-stroke:0.15px #000">Name</div>
<div class="inp" style="left:431px;top:170px;width:668px;height:21px;border:1px solid #a2a2a2;border-bottom-color:#c4c4c4;border-right-color:#c4c4c4"></div>
<div class="t" style="left:435px;top:176.24px;font-size:10.7px;line-height:10.7px;color:#000;font-weight:400;letter-spacing:0px;-webkit-text-stroke:0.15px #000">Custom Profile</div>
<div style="position:absolute;left:326px;top:221px;width:773px;height:316px;border:1px solid #878787;border-top-color:#44586a;box-sizing:border-box;box-shadow:inset 1px 0 0 #fafafa"></div>
<div class="dtab act" style="left:326px;top:195px;width:104px;height:27px"></div>
<div class="t" style="left:336.3px;top:202.52px;font-size:11.2px;line-height:11.2px;color:#52687a;font-weight:700;letter-spacing:0px;">SSL Decryption</div>
<div class="dtab" style="left:430px;top:195px;width:100px;height:26px"></div>
<div class="t" style="left:440.2px;top:202.59px;font-size:11.35px;line-height:11.35px;color:#fff;font-weight:700;letter-spacing:0px;">No Decryption</div>
<div class="dtab" style="left:529px;top:195px;width:77px;height:26px"></div>
<div class="t" style="left:538.5px;top:202.59px;font-size:11.35px;line-height:11.35px;color:#fff;font-weight:700;letter-spacing:0px;">SSH Proxy</div>
<div style="position:absolute;left:335px;top:256px;width:755px;height:266px;border:1px solid #8a8a8a;border-top-color:#4a5d6c;box-sizing:border-box;box-shadow:inset 1px 0 0 #fafafa"></div>
<div class="dtab act" style="left:612px;top:230px;width:139px;height:27px"></div>
<div class="t" style="left:622px;top:237.58px;font-size:11.25px;line-height:11.25px;color:#52687a;font-weight:700;letter-spacing:0px;">SSL Protocol Settings</div>
<div class="dtab" style="left:335px;top:230px;width:125px;height:26px"></div>
<div class="t" style="left:345px;top:237.55px;font-size:11.4px;line-height:11.4px;color:#fff;font-weight:700;letter-spacing:0px;">SSL Forward Proxy</div>
<div class="dtab" style="left:459px;top:230px;width:154px;height:26px"></div>
<div class="t" style="left:469.2px;top:237.55px;font-size:11.4px;line-height:11.4px;color:#fff;font-weight:700;letter-spacing:0px;">SSL Inbound Inspection</div>
<div style="position:absolute;left:344px;top:272px;width:737px;height:79px;border:1px solid #c9cbce;box-sizing:border-box"></div>
<div style="position:absolute;left:355px;top:271px;width:106px;height:3px;background:#ebecee"></div>
<div class="t" style="left:360.5px;top:267.93px;font-size:11.3px;line-height:11.3px;color:#52687a;font-weight:700;letter-spacing:0px;">Protocol Versions</div>
<div style="position:absolute;left:344px;top:362px;width:737px;height:81px;border:1px solid #c9cbce;box-sizing:border-box"></div>
<div style="position:absolute;left:355px;top:361px;width:126px;height:3px;background:#ebecee"></div>
<div class="t" style="left:360.5px;top:358.13px;font-size:11.3px;line-height:11.3px;color:#52687a;font-weight:700;letter-spacing:0px;">Encryption Algorithms</div>
<div style="position:absolute;left:344px;top:454px;width:737px;height:55px;border:1px solid #c9cbce;box-sizing:border-box"></div>
<div style="position:absolute;left:355px;top:453px;width:151px;height:3px;background:#ebecee"></div>
<div class="t" style="left:360.5px;top:450.33px;font-size:11.3px;line-height:11.3px;color:#52687a;font-weight:700;letter-spacing:0px;">Authentication Algorithms</div>
<div style="position:absolute;left:399.2px;top:295.9px;width:54.80000000000001px;font-size:10.7px;line-height:10.7px;color:#000;-webkit-text-stroke:0.15px #000;text-align:right;white-space:nowrap;letter-spacing:-0.15px">Min Version</div>
<div class="inp" style="left:460px;top:290px;width:610px;height:21px"></div>
<div class="trig" style="left:1049px;top:290px"></div>
<div class="t" style="left:464px;top:296.80px;font-size:10.4px;line-height:10.4px;color:#000;font-weight:400;letter-spacing:0px;-webkit-text-stroke:0.15px #000">TLSv1.0</div>
<div style="position:absolute;left:396.6px;top:320.9px;width:57.39999999999998px;font-size:10.7px;line-height:10.7px;color:#000;-webkit-text-stroke:0.15px #000;text-align:right;white-space:nowrap;letter-spacing:-0.15px">Max Version</div>
<div class="inp" style="left:460px;top:315px;width:610px;height:21px"></div>
<div class="trig" style="left:1049px;top:315px"></div>
<div class="t" style="left:464px;top:321.80px;font-size:10.4px;line-height:10.4px;color:#000;font-weight:400;letter-spacing:0px;-webkit-text-stroke:0.15px #000">Max</div>
<div class="gcb" style="left:381px;top:383px"><svg width="13" height="13" viewBox="0 0 13 13"><path d="M2.6 6.3 L5.3 9.3 L10.6 2.6" fill="none" stroke="#fff" stroke-width="2.2" stroke-linecap="round" stroke-linejoin="round"/></svg></div>
<div class="t" style="left:401px;top:387.98px;font-size:10.3px;line-height:10.3px;color:#000;font-weight:400;letter-spacing:0px;-webkit-text-stroke:0.15px #000">3DES</div>
<div class="gcb" style="left:559px;top:383px"><svg width="13" height="13" viewBox="0 0 13 13"><path d="M2.6 6.3 L5.3 9.3 L10.6 2.6" fill="none" stroke="#fff" stroke-width="2.2" stroke-linecap="round" stroke-linejoin="round"/></svg></div>
<div class="t" style="left:579px;top:387.98px;font-size:10.3px;line-height:10.3px;color:#000;font-weight:400;letter-spacing:0px;-webkit-text-stroke:0.15px #000">AES128-CBC</div>
<div class="gcb" style="left:737px;top:383px"><svg width="13" height="13" viewBox="0 0 13 13"><path d="M2.6 6.3 L5.3 9.3 L10.6 2.6" fill="none" stroke="#fff" stroke-width="2.2" stroke-linecap="round" stroke-linejoin="round"/></svg></div>
<div class="t" style="left:757px;top:387.98px;font-size:10.3px;line-height:10.3px;color:#000;font-weight:400;letter-spacing:0px;-webkit-text-stroke:0.15px #000">AES128-GCM</div>
<div class="gcb" style="left:381px;top:409px"><svg width="13" height="13" viewBox="0 0 13 13"><path d="M2.6 6.3 L5.3 9.3 L10.6 2.6" fill="none" stroke="#fff" stroke-width="2.2" stroke-linecap="round" stroke-linejoin="round"/></svg></div>
<div class="t" style="left:401px;top:413.98px;font-size:10.3px;line-height:10.3px;color:#000;font-weight:400;letter-spacing:0px;-webkit-text-stroke:0.15px #000">RC4</div>
<div class="gcb" style="left:559px;top:409px"><svg width="13" height="13" viewBox="0 0 13 13"><path d="M2.6 6.3 L5.3 9.3 L10.6 2.6" fill="none" stroke="#fff" stroke-width="2.2" stroke-linecap="round" stroke-linejoin="round"/></svg></div>
<div class="t" style="left:579px;top:413.98px;font-size:10.3px;line-height:10.3px;color:#000;font-weight:400;letter-spacing:0px;-webkit-text-stroke:0.15px #000">AES256-CBC</div>
<div class="gcb" style="left:737px;top:409px"><svg width="13" height="13" viewBox="0 0 13 13"><path d="M2.6 6.3 L5.3 9.3 L10.6 2.6" fill="none" stroke="#fff" stroke-width="2.2" stroke-linecap="round" stroke-linejoin="round"/></svg></div>
<div class="t" style="left:757px;top:413.98px;font-size:10.3px;line-height:10.3px;color:#000;font-weight:400;letter-spacing:0px;-webkit-text-stroke:0.15px #000">AES256-GCM</div>
<div class="wcb" style="left:381px;top:475px"></div>
<div class="t" style="left:401px;top:479.98px;font-size:10.3px;line-height:10.3px;color:#000;font-weight:400;letter-spacing:0px;-webkit-text-stroke:0.15px #000">MD5</div>
<div class="gcb" style="left:560px;top:475px"><svg width="13" height="13" viewBox="0 0 13 13"><path d="M2.6 6.3 L5.3 9.3 L10.6 2.6" fill="none" stroke="#fff" stroke-width="2.2" stroke-linecap="round" stroke-linejoin="round"/></svg></div>
<div class="t" style="left:580px;top:479.98px;font-size:10.3px;line-height:10.3px;color:#000;font-weight:400;letter-spacing:0px;-webkit-text-stroke:0.15px #000">SHA1</div>
<div class="gcb" style="left:739px;top:475px"><svg width="13" height="13" viewBox="0 0 13 13"><path d="M2.6 6.3 L5.3 9.3 L10.6 2.6" fill="none" stroke="#fff" stroke-width="2.2" stroke-linecap="round" stroke-linejoin="round"/></svg></div>
<div class="t" style="left:759px;top:479.98px;font-size:10.3px;line-height:10.3px;color:#000;font-weight:400;letter-spacing:0px;-webkit-text-stroke:0.15px #000">SHA256</div>
<div class="gcb" style="left:917px;top:475px"><svg width="13" height="13" viewBox="0 0 13 13"><path d="M2.6 6.3 L5.3 9.3 L10.6 2.6" fill="none" stroke="#fff" stroke-width="2.2" stroke-linecap="round" stroke-linejoin="round"/></svg></div>
<div class="t" style="left:937px;top:479.98px;font-size:10.3px;line-height:10.3px;color:#000;font-weight:400;letter-spacing:0px;-webkit-text-stroke:0.15px #000">SHA384</div>
<div class="t" style="left:326.4px;top:546.68px;font-size:9px;line-height:9px;color:#7b7b7b;font-weight:400;letter-spacing:0px;">Note: For unsupported modes and failures, the session information is cached for 12 hours, so future sessions between the same host and server pair are not decrypted. Check boxes to block</div>
<div class="t" style="left:326.4px;top:558.68px;font-size:9px;line-height:9px;color:#7b7b7b;font-weight:400;letter-spacing:0px;">those sessions instead.</div>
<div style="position:absolute;left:940px;top:577px;width:75px;height:28px;box-sizing:border-box;border-radius:6px;background:#4f8dbd;padding:2px"><div style="width:100%;height:100%;border-radius:4px;background:linear-gradient(#c9dde9,#a9c9dc 50%,#9cc0d6)"></div></div>
<div class="t" style="left:970.4px;top:587.16px;font-size:10.8px;line-height:10.8px;color:#111;font-weight:400;letter-spacing:0px;">OK</div>
<div style="position:absolute;left:1022px;top:579px;width:73px;height:24px;border-radius:4px;background:#fff"></div>
<div class="t" style="left:1042.4px;top:587.16px;font-size:10.8px;line-height:10.8px;color:#111;font-weight:400;letter-spacing:0px;">Cancel</div>
<div class="badge" style="left:637px;top:27px">1</div>
<div class="badge" style="left:149px;top:611px">2</div>
<div class="badge" style="left:219px;top:625px">3</div>
<div class="badge" style="left:322px;top:160px">4</div>
<div class="badge" style="left:745px;top:227px">5</div>
</body></html>
